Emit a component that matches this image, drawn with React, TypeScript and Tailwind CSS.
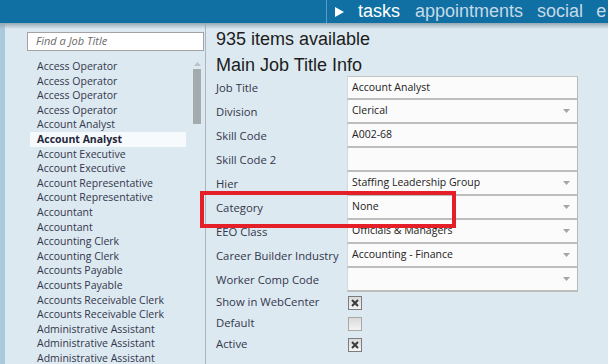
const jobs = [
  "Access Operator",
  "Access Operator",
  "Access Operator",
  "Access Operator",
  "Account Analyst",
  "Account Analyst",
  "Account Executive",
  "Account Executive",
  "Account Representative",
  "Account Representative",
  "Accountant",
  "Accountant",
  "Accounting Clerk",
  "Accounting Clerk",
  "Accounts Payable",
  "Accounts Payable",
  "Accounts Receivable Clerk",
  "Accounts Receivable Clerk",
  "Administrative Assistant",
  "Administrative Assistant",
  "Administrative Assistant",
];

const fields = [
  { label: "Job Title", value: "Account Analyst", select: false },
  { label: "Division", value: "Clerical", select: true },
  { label: "Skill Code", value: "A002-68", select: false },
  { label: "Skill Code 2", value: "", select: false },
  { label: "Hier", value: "Staffing Leadership Group", select: true },
  { label: "Category", value: "None", select: true },
  { label: "EEO Class", value: "Officials & Managers", select: true },
  { label: "Career Builder Industry", value: "Accounting - Finance", select: true },
  { label: "Worker Comp Code", value: "", select: true },
];

const checks = [
  { label: "Show in WebCenter", checked: true },
  { label: "Default", checked: false },
  { label: "Active", checked: true },
];

function Checkbox({ checked }: { checked: boolean }) {
  return (
    <svg width="14" height="14" viewBox="0 0 14 14">
      <defs>
        <linearGradient id="cbg" x1="0" y1="0" x2="0" y2="1">
          <stop offset="0" stopColor="#d9d9d9" />
          <stop offset="1" stopColor="#f4f4f4" />
        </linearGradient>
      </defs>
      <rect x="0.5" y="0.5" width="13" height="13" fill="url(#cbg)" stroke={checked ? "#7c7c7c" : "#a8a8a8"} />
      {checked && (
        <path d="M4 4 L10 10 M10 4 L4 10" stroke="#3a3a3a" strokeWidth="2" />
      )}
    </svg>
  );
}

export default function App() {
  return (
    <div className="relative h-[364px] w-[608px] overflow-hidden bg-[#dce9f1] font-['Open_Sans',sans-serif] text-[11px] text-[#34364c]">
      {/* top nav */}
      <header className="flex h-[23px] items-center bg-[#1070a3] font-['Liberation_Sans',Arial,sans-serif] text-[18px] leading-none">
        <div className="w-[326px]" />
        <div className="h-full w-px bg-[#5d9cc5]" />
        <svg width="9" height="10" viewBox="0 0 9 10" className="ml-[8px]">
          <path d="M0 0 L9 5 L0 10 Z" fill="#ffffff" />
        </svg>
        <span className="-mt-[2px] ml-[14px] text-white">tasks</span>
        <span className="-mt-[2px] ml-[15px] text-[#c5d9e6]">appointments</span>
        <span className="-mt-[2px] ml-[14px] text-[#c5d9e6]">social</span>
        <span className="-mt-[2px] ml-[13px] text-[#c5d9e6]">e</span>
      </header>
      <div className="pointer-events-none absolute left-0 top-[23px] h-[6px] w-full bg-gradient-to-b from-[#97a8b3] to-[#dce9f1]/0" />

      <div className="flex h-[341px]">
        <div className="w-[5px] bg-[#aacadc]" />

        {/* job title list */}
        <aside className="w-[201px] border-r border-[#a9b6be] pl-[22px] pt-[9px]">
          <div className="flex h-[19px] w-[177px] items-center border border-[#a3a3a3] bg-white pl-[8px] italic text-[#6b6b6b]">
            Find a Job Title
          </div>
          <div className="mt-[8px] flex">
            <ul className="ml-[3px] w-[156px] text-[10.5px]">
              {jobs.map((j, i) => (
                <li
                  key={i}
                  className={`h-[14.6px] pl-[7px] leading-[15.5px] whitespace-nowrap ${
                    i === 5 ? "bg-[#f7fafc] font-bold text-[#23253a]" : ""
                  }`}
                >
                  {j}
                </li>
              ))}
            </ul>
            <div className="ml-[7px] flex w-[8px] flex-col items-center">
              <svg width="7" height="4" viewBox="0 0 7 4" className="mt-[3px]">
                <path d="M0 4 L3.5 0 L7 4 Z" fill="#b9c2c7" />
              </svg>
              <div className="mt-[3px] h-[55px] w-[8px] bg-[#a4abaf]" />
            </div>
          </div>
        </aside>

        {/* detail form */}
        <main className="flex-1 pl-[10px] pt-[5px]">
          <div className="font-['Liberation_Sans',Arial,sans-serif] text-[18px] leading-[22px] text-[#1c1c1c]">
            935 items available
          </div>
          <div className="mt-[4px] font-['Liberation_Sans',Arial,sans-serif] text-[18px] leading-[22px] text-[#1c1c1c]">
            Main Job Title Info
          </div>

          <div className="flex flex-col">
            {fields.map((f, i) => (
              <div key={f.label} className="flex h-[24px]">
                <div className="flex w-[131px] items-center text-[11.3px]">{f.label}</div>
                <div
                  className={`flex w-[231px] items-center justify-between border-x border-b-2 border-l-[#d4d9dc] border-r-[#b9b9b9] border-b-[#bdbdbd] bg-[#fbfbfb] pl-[4px] pr-[7px] text-[10.5px] text-[#222] ${
                    i === 0 ? "border-t border-t-[#c4c4c4]" : ""
                  }`}
                >
                  <span>{f.value}</span>
                  {f.select && (
                    <svg width="7" height="4" viewBox="0 0 7 4">
                      <path d="M0 0 L7 0 L3.5 4 Z" fill="#a5a5a5" />
                    </svg>
                  )}
                </div>
              </div>
            ))}
            {checks.map((c) => (
              <div key={c.label} className="flex h-[21px] items-center">
                <div className="w-[132px] text-[11.3px]">{c.label}</div>
                <Checkbox checked={c.checked} />
              </div>
            ))}
          </div>
        </main>
      </div>

      {/* annotation highlight */}
      <div className="pointer-events-none absolute left-[200px] top-[191px] h-[37px] w-[256px] border-4 border-[#e41f27]" />
    </div>
  );
}
